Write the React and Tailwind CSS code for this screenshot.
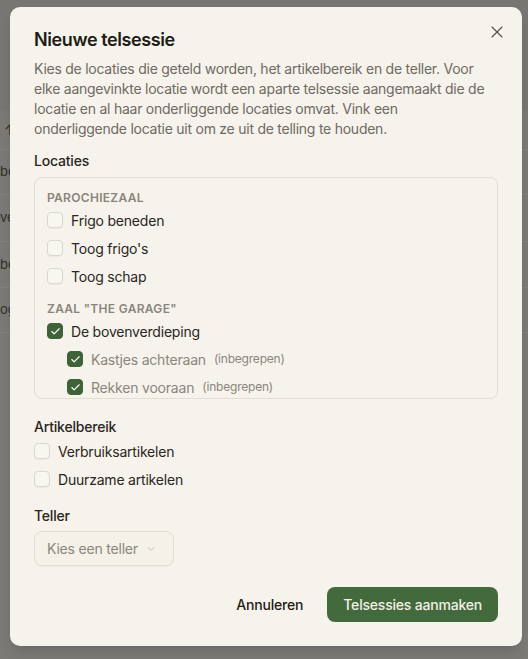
import { Check, ChevronDown, X } from 'lucide-react';

const Box = ({ checked }) => (
  <span
    className={
      checked
        ? 'flex h-4 w-4 shrink-0 items-center justify-center rounded-[4px] border border-[#3f6239] bg-[#3f6239] text-white'
        : 'flex h-4 w-4 shrink-0 items-center justify-center rounded-[4px] border border-[#dcd7cc] bg-[#f8f6f0] shadow-[0_1px_1px_rgba(0,0,0,0.04)]'
    }
  >
    {checked && <Check size={11} strokeWidth={2.5} />}
  </span>
);

const Row = ({ label, checked, child }) => (
  <div className={child ? 'flex h-7 items-center gap-2 pl-5' : 'flex h-7 items-center gap-2'}>
    <Box checked={checked} />
    <span
      className={
        child
          ? 'text-[14px] tracking-[-0.2px] text-[#8b867c]'
          : 'text-[14px] tracking-[-0.2px] text-[#2a2621]'
      }
    >
      {label}
    </span>
    {child && <span className="text-[12px] tracking-[-0.2px] text-[#8b867c]">(inbegrepen)</span>}
  </div>
);

const GroupHeader = ({ children, className = '' }) => (
  <div className={`text-[12px] font-semibold uppercase leading-4 tracking-wide text-[#8a857b] ${className}`}>
    {children}
  </div>
);

const bgRows = [
  { text: 'be', h: 'h-[45px]' },
  { text: 've', h: 'h-[47px]' },
  { text: 'be', h: 'h-[46px]' },
  { text: 'og', h: 'h-[45px]' },
];

export default function App() {
  return (
    <div
      className="relative h-[659px] w-[528px] overflow-hidden bg-[#7b7a76]"
      style={{ fontFamily: 'Inter, "Noto Sans", sans-serif' }}
    >
      {/* dimmed page behind the dialog */}
      <div className="h-[110px] bg-[#777672]" />
      <div className="flex h-10 items-center border-b border-[#84837f] pl-1 text-[14px] text-[#2f2e2b]">↑</div>
      {bgRows.map((r, i) => (
        <div key={i} className={`flex ${r.h} items-center border-b border-[#84837f] text-[13px] text-[#2f2e2b]`}>
          {r.text}
        </div>
      ))}

      {/* dialog */}
      <div className="absolute left-[10px] top-[7px] w-[512px] rounded-[10px] bg-[#f6f3ec] p-6 shadow-lg">
        <button className="absolute right-[15px] top-[15px] text-[#55514a]">
          <X size={20} strokeWidth={1.4} />
        </button>

        <h2 className="text-[18px] font-semibold leading-[18px] tracking-[-0.4px] text-[#1f1c17]">Nieuwe telsessie</h2>
        <p className="mt-[10px] whitespace-nowrap text-[14px] leading-5 tracking-[-0.25px] text-[#6f6a62]">
          Kies de locaties die geteld worden, het artikelbereik en de teller. Voor
          <br />
          elke aangevinkte locatie wordt een aparte telsessie aangemaakt die de
          <br />
          locatie en al haar onderliggende locaties omvat. Vink een
          <br />
          onderliggende locatie uit om ze uit de telling te houden.
        </p>

        <div className="mt-3 text-[14px] font-medium leading-5 tracking-[-0.2px] text-[#2a2621]">Locaties</div>
        <div className="mt-1.5 h-[222px] overflow-hidden rounded-lg border border-[#e2ddd3] px-3 pt-3">
          <GroupHeader>Parochiezaal</GroupHeader>
          <Row label="Frigo beneden" />
          <Row label="Toog frigo's" />
          <Row label="Toog schap" />
          <GroupHeader className="mt-[11px]">Zaal "The Garage"</GroupHeader>
          <Row label="De bovenverdieping" checked />
          <Row label="Kastjes achteraan" checked child />
          <Row label="Rekken vooraan" checked child />
        </div>

        <div className="mt-[18px] text-[14px] font-medium leading-5 tracking-[-0.2px] text-[#2a2621]">Artikelbereik</div>
        <Row label="Verbruiksartikelen" />
        <Row label="Duurzame artikelen" />

        <div className="mt-[13px] text-[14px] font-medium leading-5 tracking-[-0.2px] text-[#2a2621]">Teller</div>
        <div className="mt-[5px] flex h-[35px] w-[140px] items-center justify-between rounded-lg border border-[#e2ddd3] bg-[#f4f1e9] pl-3 pr-4 shadow-[0_1px_1px_rgba(0,0,0,0.03)]">
          <span className="text-[14px] tracking-[-0.2px] text-[#8b867c]">Kies een teller</span>
          <ChevronDown size={12} strokeWidth={1.5} className="text-[#b5b0a6]" />
        </div>

        <div className="mt-[21px] flex justify-end gap-2">
          <button className="h-[35px] rounded-lg px-4 text-[14px] font-medium tracking-[-0.2px] text-[#1f1c17]">
            Annuleren
          </button>
          <button className="h-[35px] rounded-lg bg-[#436a3d] px-4 text-[14px] font-medium tracking-[-0.2px] text-[#f3f0e7]">
            Telsessies aanmaken
          </button>
        </div>
      </div>
    </div>
  );
}
